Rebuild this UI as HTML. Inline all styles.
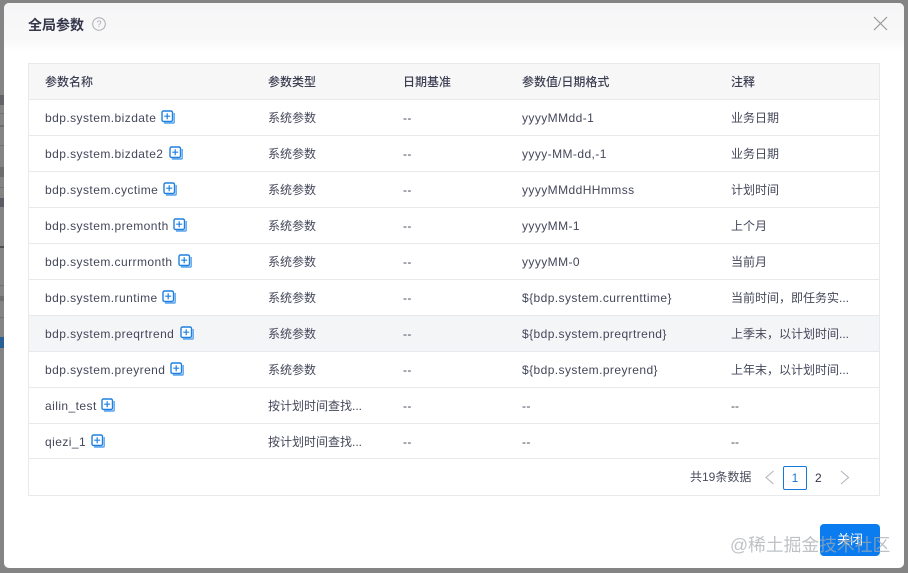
<!DOCTYPE html>
<html><head><meta charset="utf-8"><style>
html,body{margin:0;padding:0}
body{width:908px;height:573px;overflow:hidden;background:#848484;position:relative;font-family:"Liberation Sans","Noto Sans CJK SC",sans-serif;color:#44475a;font-size:12px}
.m{position:absolute;left:4px;top:3px;width:900px;height:565px;background:#fff;border-radius:5px;overflow:hidden}
.hd{position:absolute;left:0;top:0;width:900px;height:48px;background:linear-gradient(#f6f6f7,#f8f8f9 75%,#fff)}
.a{position:absolute;white-space:nowrap}
.t{position:absolute;left:28px;top:63px;width:850px;height:431px;border:1px solid #e8e9ec;filter:blur(.25px)}
.th{position:absolute;left:0;top:0;width:850px;height:35px;background:#f7f7f8;border-bottom:1px solid #e8e9ec}
.r{position:absolute;left:0;width:850px;height:35px;border-bottom:1px solid #e8e9ec}
.c{position:absolute;white-space:nowrap;line-height:16px;top:10px}
.c1{left:16px;letter-spacing:.44px}.c2{left:239px}.c3{left:374px;letter-spacing:.4px}.c4{left:493px;letter-spacing:.42px}.c5{left:702px}
.th .c{font-weight:500;top:10px;color:#3c3f52}
svg.i{position:absolute;top:10px;width:14px;height:14px}
</style></head><body>
<div class="a" style="left:0;top:95px;width:4px;height:10px;background:#4a4a52;opacity:.55"></div>
<div class="a" style="left:0;top:113px;width:4px;height:1px;background:#727272"></div>
<div class="a" style="left:0;top:125px;width:4px;height:2px;background:#6e6e6e"></div>
<div class="a" style="left:0;top:145px;width:4px;height:1px;background:#727272"></div>
<div class="a" style="left:0;top:167px;width:4px;height:10px;background:#4a4a52;opacity:.4"></div>
<div class="a" style="left:0;top:187px;width:4px;height:1px;background:#727272"></div>
<div class="a" style="left:0;top:198px;width:4px;height:9px;background:#3d4050;opacity:.6"></div>
<div class="a" style="left:0;top:246px;width:4px;height:2px;background:#505050"></div>
<div class="a" style="left:0;top:285px;width:4px;height:1px;background:#727272"></div>
<div class="a" style="left:0;top:296px;width:4px;height:5px;background:#6e6e6e"></div>
<div class="a" style="left:0;top:317px;width:4px;height:1px;background:#727272"></div>
<div class="a" style="left:0;top:337px;width:4px;height:11px;background:#2a5f96"></div>
<div class="m">
<div class="hd"></div>
<div class="a" style="left:24px;top:12px;font-size:14px;font-weight:700;line-height:20px;color:#33364a">全局参数</div>
<svg class="a" style="left:88px;top:14px" width="14" height="14" viewBox="0 0 14 14"><circle cx="7" cy="7" r="6.3" fill="none" stroke="#a9abb2"/><text x="7" y="10.2" font-size="9" text-anchor="middle" fill="#a9abb2" font-family="Liberation Sans">?</text></svg>
<svg class="a" style="left:869px;top:13px" width="15" height="15" viewBox="0 0 15 15"><path d="M1 1L14 14M14 1L1 14" stroke="#96989d" stroke-width="1.2" fill="none"/></svg>
</div>
<div class="t">
<div class="th"><div class="c c1" style="letter-spacing:0">参数名称</div><div class="c c2">参数类型</div><div class="c c3" style="letter-spacing:0">日期基准</div><div class="c c4" style="letter-spacing:0">参数值/日期格式</div><div class="c c5">注释</div></div>

<div class="r" style="top:36px"><div class="c c1">bdp.system.bizdate</div><svg class="i" style="left:132px" viewBox="0 0 14 14"><use href="#p"/></svg><div class="c c2">系统参数</div><div class="c c3">--</div><div class="c c4">yyyyMMdd-1</div><div class="c c5">业务日期</div></div>
<div class="r" style="top:72px"><div class="c c1">bdp.system.bizdate2</div><svg class="i" style="left:140px" viewBox="0 0 14 14"><use href="#p"/></svg><div class="c c2">系统参数</div><div class="c c3">--</div><div class="c c4">yyyy-MM-dd,-1</div><div class="c c5">业务日期</div></div>
<div class="r" style="top:108px"><div class="c c1">bdp.system.cyctime</div><svg class="i" style="left:134px" viewBox="0 0 14 14"><use href="#p"/></svg><div class="c c2">系统参数</div><div class="c c3">--</div><div class="c c4">yyyyMMddHHmmss</div><div class="c c5">计划时间</div></div>
<div class="r" style="top:144px"><div class="c c1">bdp.system.premonth</div><svg class="i" style="left:144px" viewBox="0 0 14 14"><use href="#p"/></svg><div class="c c2">系统参数</div><div class="c c3">--</div><div class="c c4">yyyyMM-1</div><div class="c c5">上个月</div></div>
<div class="r" style="top:180px"><div class="c c1">bdp.system.currmonth</div><svg class="i" style="left:149px" viewBox="0 0 14 14"><use href="#p"/></svg><div class="c c2">系统参数</div><div class="c c3">--</div><div class="c c4">yyyyMM-0</div><div class="c c5">当前月</div></div>
<div class="r" style="top:216px"><div class="c c1">bdp.system.runtime</div><svg class="i" style="left:133px" viewBox="0 0 14 14"><use href="#p"/></svg><div class="c c2">系统参数</div><div class="c c3">--</div><div class="c c4">${bdp.system.currenttime}</div><div class="c c5">当前时间，即任务实...</div></div>
<div class="r" style="top:252px;background:#f4f5f7"><div class="c c1">bdp.system.preqrtrend</div><svg class="i" style="left:151px" viewBox="0 0 14 14"><use href="#p"/></svg><div class="c c2">系统参数</div><div class="c c3">--</div><div class="c c4">${bdp.system.preqrtrend}</div><div class="c c5">上季末，以计划时间...</div></div>
<div class="r" style="top:288px"><div class="c c1">bdp.system.preyrend</div><svg class="i" style="left:141px" viewBox="0 0 14 14"><use href="#p"/></svg><div class="c c2">系统参数</div><div class="c c3">--</div><div class="c c4">${bdp.system.preyrend}</div><div class="c c5">上年末，以计划时间...</div></div>
<div class="r" style="top:324px"><div class="c c1">ailin_test</div><svg class="i" style="left:72px" viewBox="0 0 14 14"><use href="#p"/></svg><div class="c c2">按计划时间查找...</div><div class="c c3">--</div><div class="c c4">--</div><div class="c c5">--</div></div>
<div class="r" style="top:360px;height:34px"><div class="c c1">qiezi_1</div><svg class="i" style="left:62px" viewBox="0 0 14 14"><use href="#p"/></svg><div class="c c2">按计划时间查找...</div><div class="c c3">--</div><div class="c c4">--</div><div class="c c5">--</div></div>

<div class="a" style="left:661px;top:405px;line-height:16px;color:#4a4d60">共19条数据</div>
<svg class="a" style="left:735px;top:406px" width="12" height="15" viewBox="0 0 12 15"><path d="M9.5 1L2 7.5L9.5 14" fill="none" stroke="#b4b6bc" stroke-width="1.1"/></svg>
<div class="a" style="left:754px;top:402px;width:22px;height:22px;border:1px solid #1479d7;border-radius:2px;text-align:center;line-height:22px;color:#1479d7">1</div>
<div class="a" style="left:786px;top:406px;line-height:16px;color:#33364a">2</div>
<svg class="a" style="left:810px;top:406px" width="12" height="15" viewBox="0 0 12 15"><path d="M2 1L9.5 7.5L2 14" fill="none" stroke="#b4b6bc" stroke-width="1.1"/></svg>
</div>
<div class="a" style="left:820px;top:524px;width:60px;height:32px;border-radius:4px;background:#0a7cf0;color:#fff;text-align:center;line-height:32px;font-size:13px">关闭</div>
<div class="a" style="left:730px;top:534px;font-size:17.8px;line-height:22px;color:rgba(165,170,175,.72)">@稀土掘金技术社区</div>
<svg width="0" height="0" style="position:absolute"><defs><g id="p" fill="none"><path d="M3 13H11.5Q13.4 13 13.4 11V3" stroke="#6fb0f0" stroke-width="1.8"/><rect x="1" y="1" width="10.5" height="10.5" rx="1.5" fill="#fff" stroke="#1f80e0" stroke-width="1.4"/><path d="M6.2 3.2V9.2M3.2 6.2H9.2" stroke="#1f80e0" stroke-width="1.2"/></g></defs></svg>
</body></html>
